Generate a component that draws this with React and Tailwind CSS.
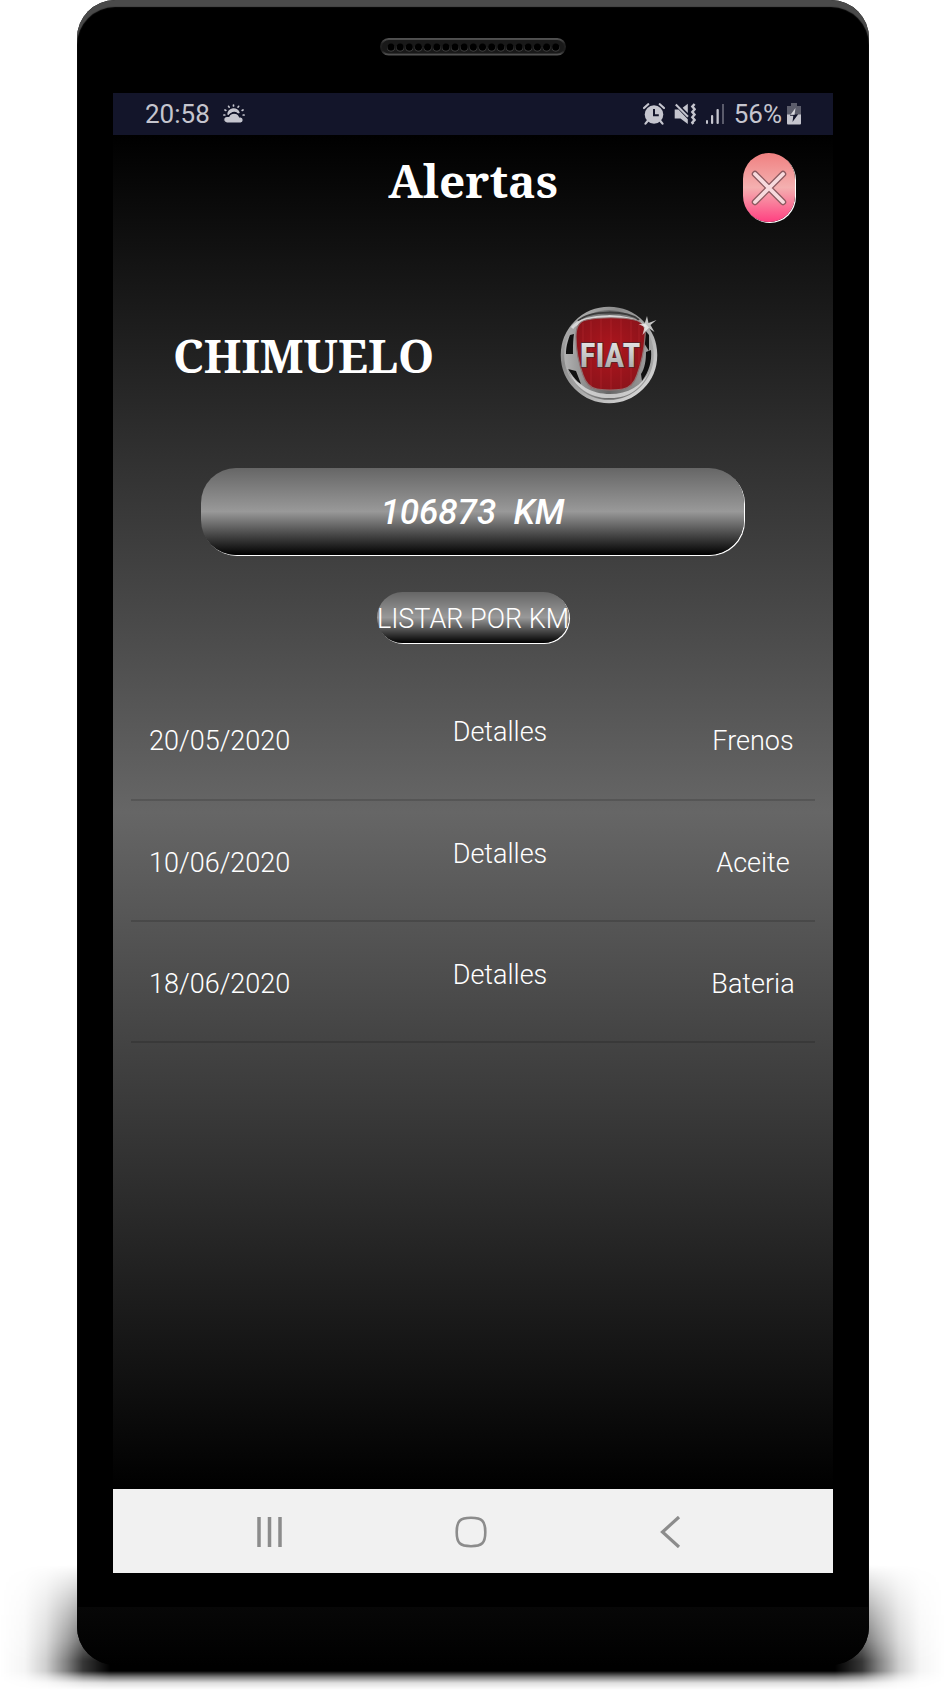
import React from "react";

const alerts = [
  { date: "20/05/2020", type: "Frenos" },
  { date: "10/06/2020", type: "Aceite" },
  { date: "18/06/2020", type: "Bateria" },
];

const speakerHoles = Array.from({ length: 19 }, (_, i) => 11 + i * 9.15);

function Speaker() {
  return (
    <svg className="mx-auto block" width="186" height="18" viewBox="0 0 186 18" aria-hidden="true">
      <defs>
        <linearGradient id="spk" x1="0" y1="0" x2="0" y2="1">
          <stop offset="0" stopColor="#505050" />
          <stop offset="0.3" stopColor="#222" />
          <stop offset="0.75" stopColor="#1c1c1c" />
          <stop offset="1" stopColor="#505050" />
        </linearGradient>
      </defs>
      <rect x="1" y="1" width="184" height="15.5" rx="7.7" fill="#191919" stroke="url(#spk)" strokeWidth="2" />
      {speakerHoles.map((x) => (
        <g key={x}>
          <circle cx={x} cy="9.8" r="3.8" fill="#4a4a4a" />
          <circle cx={x} cy="9.1" r="3.6" fill="#000" />
        </g>
      ))}
    </svg>
  );
}

function WeatherIcon() {
  return (
    <svg width="22" height="20" viewBox="0 0 22 20" aria-hidden="true">
      <g stroke="#c5c5ce" strokeWidth="1.7" strokeLinecap="round">
        <path d="M10.500 1v1M5.600 2.300l.5.9M15.600 2.300l-.5.9M2 5.900l.9.5M20 5.900l-.9.500M.9 11h.9M20.200 11h.9" />
      </g>
      <path d="M4.200 10.500a6.400 6.400 0 0 1 12.600-1.500l-1.800.5a5 5 0 0 0-7-.5 6 6 0 0 0-2.300 2z" fill="#c5c5ce" />
      <path d="M4 19a3.300 3.300 0 0 1 0-6.600h1.800c1-2 3-3.200 5.200-3.200 2.700 0 4.800 1.600 5.500 3.700h1.200a3.100 3.100 0 0 1 0 6.100z" fill="#c5c5ce" stroke="#13152a" strokeWidth="1.200" />
    </svg>
  );
}

function AlarmIcon() {
  return (
    <svg width="22" height="22" viewBox="0 0 22 22" aria-hidden="true">
      <circle cx="11" cy="11.500" r="9.300" fill="#c5c5ce" />
      <path d="M1 5 5.200 1.200M21 5l-4.200-3.800M4.600 18 2.500 20.600M17.400 18l2.100 2.600" stroke="#c5c5ce" strokeWidth="2.200" strokeLinecap="round" />
      <path d="M11 6v6.300h4.800" fill="none" stroke="#13152a" strokeWidth="2" />
    </svg>
  );
}

function MuteIcon() {
  return (
    <svg width="22" height="22" viewBox="0 0 22 22" aria-hidden="true">
      <path d="M.7 6.500h3.800l9.300 9.800v4.700L6.500 15.500H.7z" fill="#c5c5ce" />
      <path d="M8.600 4.800 13.800.8v9.200z" fill="#c5c5ce" />
      <path d="M1.800 1.500 14 13.800" stroke="#c5c5ce" strokeWidth="2" />
      <path d="m20.600 1-2.300 2.600 2.300 2.700-2.300 2.600 2.300 2.700-2.300 2.600 2.300 2.700-2.300 2.600 1 1.500" fill="none" stroke="#c5c5ce" strokeWidth="2.400" />
    </svg>
  );
}

function SignalIcon() {
  return (
    <svg width="20" height="22" viewBox="0 0 20 22" aria-hidden="true">
      <g fill="#c5c5ce">
        <rect x="1" y="17" width="2" height="4" rx="1" />
        <rect x="6" y="12" width="2.200" height="9" rx="1" />
        <rect x="11.500" y="6" width="2.300" height="15" rx="1" />
        <rect x="17" y="1" width="2" height="20" opacity="0.4" />
      </g>
    </svg>
  );
}

function BatteryIcon() {
  return (
    <svg width="14" height="22" viewBox="0 0 14 22" aria-hidden="true">
      <path d="M4 0h6v3h4v9H0V3h4z" fill="#5c5d6b" />
      <path d="M0 11.500h14V20.500a1 1 0 0 1-1 1H1a1 1 0 0 1-1-1z" fill="#c5c5ce" />
      <path d="M8.500 5 7.600 11.500H3.800L2.800 12.800h3.500L5.500 19l5.700-7.800H7.600z" fill="#13152a" />
      <path d="M8.500 5 3.500 11.700h4z" fill="#d5d5db" />
    </svg>
  );
}

function CloseIcon() {
  return (
    <svg width="36" height="36" viewBox="0 0 36 36" aria-hidden="true">
      <path d="M4 4l28 28M32 4 4 32" stroke="#8d5a60" strokeWidth="6.500" strokeLinecap="round" />
      <path d="M4 4l28 28M32 4 4 32" stroke="#f7dadd" strokeWidth="3.800" strokeLinecap="round" />
    </svg>
  );
}

function FiatLogo() {
  return (
    <svg width="100" height="100" viewBox="0 0 100 100" role="img" aria-label="FIAT">
      <defs>
        <linearGradient id="rim" x1="0" y1="0" x2="1" y2="1">
          <stop offset="0" stopColor="#c4c4c4" />
          <stop offset="0.3" stopColor="#8a8a8a" />
          <stop offset="0.55" stopColor="#aaa" />
          <stop offset="1" stopColor="#e2e2e2" />
        </linearGradient>
        <linearGradient id="inner" x1="0" y1="0" x2="1" y2="0">
          <stop offset="0" stopColor="#b5b5b5" />
          <stop offset="0.5" stopColor="#666" />
          <stop offset="1" stopColor="#aaa" />
        </linearGradient>
        <radialGradient id="red" cx="0.5" cy="0.45" r="0.7">
          <stop offset="0" stopColor="#ae151d" />
          <stop offset="1" stopColor="#85131a" />
        </radialGradient>
        <linearGradient id="letters" x1="0" y1="0" x2="0" y2="1">
          <stop offset="0" stopColor="#f0f0f0" />
          <stop offset="1" stopColor="#9c9c9c" />
        </linearGradient>
      </defs>
      <circle cx="50" cy="50" r="46.500" fill="url(#inner)" stroke="url(#rim)" strokeWidth="3.500" />
      <path d="M19 16C31 5 68 5 80 15" fill="none" stroke="#3b3b3b" strokeWidth="2" />
      <path d="M13 23C25 8 73 8 86 22" fill="none" stroke="#d6d6d6" strokeWidth="3" />
      <path d="M11 30c-3 8-4 13-4 19h7c0-8 0-13 1-20zM9 64l8 2 5 13c-6-3-11-8-13-15zM84 23l6 7v16l-5-8zM92 45c1 12-2 21-9 31l-1-7c4-6 5-14 5-22z" fill="#111" />
      <path d="M8 62c8 23 26 32 44 31 18 0 32-10 39-28-8 16-22 24-40 24S18 81 8 62z" fill="#ddd" opacity="0.8" />
      <path d="M27 15c14-3 36-3 49 0 8 2 11 8 10 17-1 14-4 27-8 38-3 9-8 13-14 14-9 1.500-17 1.500-26 0-7-1-11-5-14-14-4-11-7-25-7-38 0-9 2-15 10-17z" fill="url(#red)" stroke="#8f7070" strokeWidth="1.200" />
      <path d="M24 18v44M32 16v68M42 14v71M52 14v71M62 14v71M72 16v65M80 20v40" stroke="#d03940" strokeWidth="1" opacity="0.300" />
      <text x="51" y="62" textAnchor="middle" fontFamily="'Roboto Condensed','Liberation Sans Narrow',sans-serif" fontWeight="700" fontSize="33" fill="url(#letters)" stroke="#51262a" strokeWidth="1.500" paintOrder="stroke">FIAT</text>
      <path d="m88 11 1.500 7 8-3-6 5 4 7-6-4-6 7 2-8-6-3h6z" fill="#eee" opacity="0.800" />
    </svg>
  );
}

function StatusBar() {
  return (
    <div className="flex h-[42px] items-center justify-between bg-[#13152a] px-8 text-[26px] leading-8 text-[#c5c5ce]">
      <div className="flex items-center gap-[13px]">
        <span>20:58</span>
        <WeatherIcon />
      </div>
      <div className="flex items-center gap-[9px]">
        <AlarmIcon />
        <MuteIcon />
        <SignalIcon />
        <div className="flex items-center gap-[5px]">
          <span>56%</span>
          <BatteryIcon />
        </div>
      </div>
    </div>
  );
}

function NavBar() {
  return (
    <nav className="flex h-[84px] items-stretch justify-center bg-[#f1f1f1] pt-px pr-1">
      <button type="button" aria-label="Recientes" className="flex w-[200px] items-center justify-center">
        <svg width="32" height="32" viewBox="0 0 32 32" aria-hidden="true">
          <path d="M4 1v30M14.500 1v30M25 1v30" stroke="#8c8c8c" strokeWidth="3.500" />
        </svg>
      </button>
      <button type="button" aria-label="Inicio" className="flex w-[200px] items-center justify-center">
        <svg width="32" height="32" viewBox="0 0 32 32" aria-hidden="true">
          <path d="M16 1.800c11 0 14.300 3 14.300 14.200S27 30.200 16 30.200 1.700 27.200 1.700 16 5 1.800 16 1.800z" fill="none" stroke="#8c8c8c" strokeWidth="2.600" />
        </svg>
      </button>
      <button type="button" aria-label="Atrás" className="flex w-[200px] items-center justify-center">
        <svg width="32" height="32" viewBox="0 0 32 32" aria-hidden="true">
          <path d="M24 1 7.500 16 24 31" fill="none" stroke="#8c8c8c" strokeWidth="3.200" />
        </svg>
      </button>
    </nav>
  );
}

export default function App() {
  return (
    <div className="relative isolate flex min-h-screen flex-col overflow-hidden bg-white pr-[76px] pb-[25px] pl-[77px] font-['Roboto',sans-serif]">
      <div className="absolute inset-x-0 bottom-0 -z-10 h-[125px] bg-[linear-gradient(to_right,transparent_0,#0000000a_25px,#00000030_46px,#00000080_67px,#000000c8_83px,#000_110px,#000_calc(100%-110px),#000000c8_calc(100%-83px),#00000080_calc(100%-67px),#00000030_calc(100%-46px),#0000000a_calc(100%-25px),transparent_100%)] [mask-image:linear-gradient(to_bottom,transparent_0,#00000073_45px,#000000b8_75px,#000_96px,#000_106px,#00000080_112px,#00000020_118px,transparent_125px)]" />

      <div className="relative flex flex-1 flex-col overflow-hidden rounded-[38px] bg-black px-9 shadow-[inset_0_7px_1px_0_#4a4a4a]">
        <div className="pt-[38px] pb-[37px]">
          <Speaker />
        </div>

        <div className="flex flex-1 flex-col">
          <StatusBar />
          <main className="flex flex-1 flex-col bg-[linear-gradient(to_bottom,#000,#666_50%,#000)] text-white">
            <header className="grid grid-cols-[1fr_auto_1fr] items-start px-[38px] pt-[18px]">
              <h1 className="col-start-2 font-['Noto_Serif','DejaVu_Serif',serif] text-[46px] leading-[54px] font-bold">
                Alertas
              </h1>
              <button
                type="button"
                aria-label="Cerrar"
                className="flex h-[69px] w-[52px] items-center justify-center justify-self-end rounded-[26px] bg-[linear-gradient(to_bottom,#f08080,#f4b0b0_50%,#ff4081)] shadow-[1px_1px_0_#fff]"
              >
                <CloseIcon />
              </button>
            </header>

            <section className="grid grid-cols-[5fr_3fr] items-center justify-items-center pt-[83px] pr-[110px]">
              <h2 className="font-['Noto_Serif','DejaVu_Serif',serif] text-[46px] leading-[54px] font-bold">
                CHIMUELO
              </h2>
              <FiatLogo />
            </section>

            <div className="mr-[89px] ml-[88px] mt-[63px] flex h-[87px] items-center justify-center rounded-[35px] bg-[linear-gradient(to_bottom,#666,#999_50%,#000)] pt-[3px] text-[35px] leading-10 font-medium whitespace-pre italic shadow-[1px_1px_0_#fff]">
              106873  KM
            </div>

            <button
              type="button"
              className="mx-auto mt-[37px] flex h-[51px] items-center justify-center rounded-[26px] bg-[linear-gradient(to_bottom,#666,#999_50%,#000)] pt-[3px] text-[27px] leading-8 font-light whitespace-nowrap shadow-[1px_1px_0_#fff]"
            >
              LISTAR POR KM
            </button>

            <div className="px-[18px] pt-9">
              <table className="w-full table-fixed border-collapse text-[27px] leading-8 font-light">
                <tbody>
                  {alerts.map((a) => (
                    <tr key={a.date} className="h-[121px] border-b-2 border-black/15">
                      <td className="w-[178px] p-0 pt-1 pl-[18px] align-middle">{a.date}</td>
                      <td className="p-0 pb-[14px] text-center align-middle">Detalles</td>
                      <td className="w-[124px] p-0 pt-1 text-center align-middle">{a.type}</td>
                    </tr>
                  ))}
                </tbody>
              </table>
            </div>
          </main>
          <NavBar />
        </div>

        <div className="-mx-9 mt-[34px] h-[58px] bg-[linear-gradient(to_bottom,#070707,#000)]" />
      </div>
    </div>
  );
}
